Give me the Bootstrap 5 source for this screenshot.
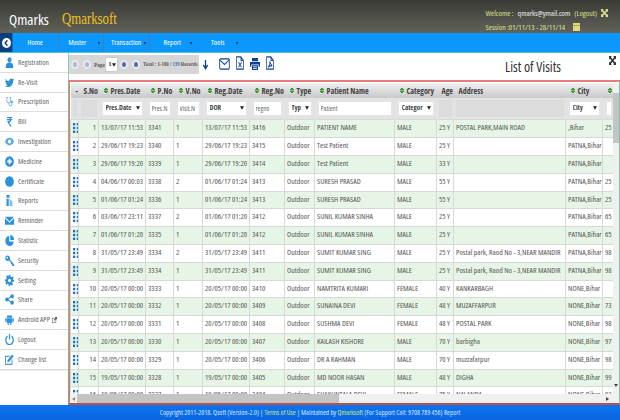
<!DOCTYPE html>
<html lang="en"><head><meta charset="utf-8"><title>Qmarks</title>
<link href="https://cdn.jsdelivr.net/npm/bootstrap@5.3.0/dist/css/bootstrap.min.css" rel="stylesheet">
<style>
html,body{overflow:hidden;width:620px;height:420px}
.page{width:620px;height:420px;font-family:"Open Sans","Liberation Sans",sans-serif;font-stretch:80%;font-size:8px;color:#555;overflow:hidden;background:#fff}
.minh0{min-height:0;min-width:0}
.sq{display:inline-block;transform:scaleX(.8);transform-origin:0 50%}
.top{height:33px;background:linear-gradient(#3a3a36,#62625b);padding:0 12px 0 9px;flex:none}
.brand1{font-size:15px;color:#fff;margin-top:9px;line-height:20px}
.brand2{font-family:"Liberation Serif",serif;font-size:16px;color:#eec21e;margin:9px 0 0 13px;line-height:20px}
.welcome{color:#dbe08c;font-size:7.8px;line-height:14px;margin-top:6px}
.welcome b{font-weight:400;color:#eee}
.bar{height:20px;background:#0b97fb;flex-wrap:nowrap;border-bottom:1px solid #55c0cc;flex:none}
.bar .back{width:13px;height:19px;background:#0a3f80;display:flex;align-items:center;justify-content:center;border-right:1px solid #07c}
.bar .nav-link{width:45.5px;height:19px;padding:0;color:#fff;font-size:7.5px;line-height:19px;text-align:center;border-right:1px solid #3a80c0;position:relative}
.bar .nav-link.plain{border-right:0}
.bar .nav-link.shift{padding-right:7px}
.caret{display:inline-block;border:1.6px solid transparent;border-top:3px solid #123;border-bottom:0;position:absolute;right:3px;top:9px}
.side{width:68px;background:#fff;flex:none}
.side .list-group-item{height:19.8px;padding:0 0 0 5px;border:0;border-bottom:1px solid #ddd;box-shadow:0 1px 1px #eee;border-radius:0;font-size:7.5px;color:#666;display:flex;align-items:center;gap:4px;background:#fff;white-space:nowrap}
.side svg{width:9px;height:11px;flex:none;fill:#2a92dc}
.side svg.ext{width:5px;height:6px;margin-left:-2px}
.tools{height:27px;padding:2px 4px 0 0;border-left:1px solid #7cc4b8;flex:none}
.pager{height:19px;width:130px;background:#d6d6d6;font-family:"Liberation Serif",serif;font-weight:700;font-size:6px;color:#555;padding-left:2px;white-space:nowrap;flex:none;overflow:hidden}
.dot{width:8px;height:9px;border-radius:50%;background:#a9b6cf;border:2px solid #e8e8f0;flex:none;margin-right:3.500px}
.dot.on{background:#5468a8}
.pager .pg{width:15px;margin-right:-3px;font-size:6.5px}
.pager .form-select{width:13px;height:15px;flex:none;min-height:0;border:1px solid #ccc;border-radius:0;background-color:#fff;font-family:"Liberation Serif",serif;font-size:7px;font-weight:700;color:#444;padding:0 0 0 2px;margin:0 2px 0 1px;background-size:4px 4px;background-position:right 1px center;background-image:url("data:image/svg+xml,%3Csvg xmlns='http://www.w3.org/2000/svg' viewBox='0 0 6 5'%3E%3Cpath d='M0 0h6L3 5z' fill='%23222'/%3E%3C/svg%3E")}
.pager em{font-style:normal;color:#3a6ab0}
.tico{fill:none;stroke:#0f3f96;stroke-width:1.2;flex:none}
.tools svg{flex:none}
.i-arrow{width:7px;height:11px;margin:4px 0 0 3px}
.i-mail{width:11px;height:12px;margin:3px 0 0 10px}
.i-doc{width:8px;height:14px;margin:1px 0 0 6px}
.i-print{width:10px;height:12px;margin:3px 0 0 6px}
.title{font-size:14px;color:#333;margin:2px 48px 0 auto;line-height:20px}
.fs{width:7px;height:9px;margin:1px 0 0 0}
.panel{height:325px;border-top:2px solid #e87c7c;border-bottom:2px solid #b8543c;border-right:1px solid #7cc4a8;border-left:2px solid #b09078;padding-top:1px;min-height:0}
.wrap{overflow:hidden;flex:1;min-width:0}
.grid{table-layout:fixed;width:543px;margin:0;border-collapse:collapse;font-size:7.8px;--bs-table-bg:transparent;color:#555}
.grid col:nth-child(1){width:8px}.grid col:nth-child(2){width:20px}.grid col:nth-child(3){width:47px}.grid col:nth-child(4){width:28px}.grid col:nth-child(5){width:29px}.grid col:nth-child(6){width:47px}.grid col:nth-child(7){width:35px}.grid col:nth-child(8){width:30px}.grid col:nth-child(9){width:80px}.grid col:nth-child(10){width:42px}.grid col:nth-child(11){width:17px}.grid col:nth-child(12){width:112px}.grid col:nth-child(13){width:37px}.grid col:nth-child(14){width:11px}
.grid th,.grid td{padding:0 2px;border:1px solid #d8d8d8;white-space:nowrap;overflow:hidden;vertical-align:middle}
.grid .h th{height:15px;padding:0 0 0 5px;background:linear-gradient(#efefef,#c9c9c9);font-weight:700;color:#444;border:0;font-size:8px}
.grid .f th{height:21px;background:#e3e3e3;border:0;padding:1px 2px}
.grid tbody tr{height:18px}
.grid tbody tr:nth-child(5n){height:17px}
.grid tbody tr:nth-child(odd){background:#e7f5e6}
.grid tbody tr:nth-child(even){background:#fff}
.grid .n{text-align:right}
.grid .form-control,.grid .form-select{font-family:"Open Sans",sans-serif;font-stretch:80%;height:17px;min-height:0;font-size:7px;padding:0 2px;border:2px solid #e4e4e4;border-radius:0;background-color:#fff;color:#777;box-shadow:none}
.grid .form-select{font-weight:700;color:#444;background-image:url("data:image/svg+xml,%3Csvg xmlns='http://www.w3.org/2000/svg' viewBox='0 0 6 5'%3E%3Cpath d='M0 0h6L3 5z' fill='%23222'/%3E%3C/svg%3E");background-size:4px 4px;background-position:right 2px center;padding-left:3px;padding-right:7px}
.grid .blank{display:block;height:17px;background:#dcdcdc}
.sort{display:inline-block;width:4px;height:8px;margin-right:3px;vertical-align:-1px;background:linear-gradient(135deg,transparent 50%,#3a9a3a 50%) 0 0/2px 3.5px no-repeat,linear-gradient(225deg,transparent 50%,#3a9a3a 50%) 2px 0/2px 3.5px no-repeat,linear-gradient(45deg,transparent 50%,#3a9a3a 50%) 0 4.5px/2px 3.5px no-repeat,linear-gradient(-45deg,transparent 50%,#3a9a3a 50%) 2px 4.5px/2px 3.5px no-repeat}
.grip{width:6px;height:10px;display:block;fill:#1c70c8}
.vbar{width:6px;background:#f0f0f0;flex:none;padding-top:10px;position:relative}
.vbar i{display:block;height:50px;background:#c4c4c4}
.vbar::after{content:"";position:absolute;left:1px;bottom:7px;border:2px solid transparent;border-top:3px solid #444;border-bottom:0}
.hbar{height:9px;background:#f0f0f0;flex:none;padding-left:7px;position:relative}
.hbar i{display:block;height:9px;width:262px;background:#c4c4c4}
.hbar::before{content:"";position:absolute;left:2px;top:3px;border:2px solid transparent;border-right:3px solid #888;border-left:0}
.hbar::after{content:"";position:absolute;right:10px;top:3px;border:2px solid transparent;border-left:3px solid #444;border-right:0}
.foot{height:15px;background:linear-gradient(#0d74f2,#0a66e0);color:#d7e6ff;font-size:7.05px;line-height:15px;text-align:center;white-space:nowrap;flex:none}
.foot a{color:#cfe86e;text-decoration:none}
</style></head>
<body>
<div class="page d-flex flex-column">
<svg width="0" height="0" class="position-absolute">
<symbol id="grip" viewBox="0 0 7 10" preserveAspectRatio="none"><rect width="2.6" height="2.4"/><rect x="4.4" width="2.6" height="2.4"/><rect y="3.8" width="2.6" height="2.4"/><rect x="4.4" y="3.8" width="2.6" height="2.4"/><rect y="7.6" width="2.6" height="2.4"/><rect x="4.4" y="7.6" width="2.6" height="2.4"/></symbol>
</svg>
<header class="top d-flex justify-content-between">
 <div class="d-flex"><div class="brand1">Qmarks</div><div class="brand2 sq">Qmarksoft</div></div>
 <div class="welcome">
  <div class="d-flex align-items-center gap-1">Welcome : <b>qmarks@ymail.com</b> (Logout) <svg width="7" height="8" viewBox="0 0 8 8" preserveAspectRatio="none" fill="#dbe08c"><path d="M0 0h3L2.200 1 4 2.800 5.800 1 5 0h3v3L7 2.200 5.200 4 7 5.800 8 5v3H5l.8-1L4 5.200 2.200 7 3 8H0V5l1 .8L2.800 4 1 2.200 0 3z"/></svg></div>
  <div class="d-flex align-items-center gap-1">Session :01/11/13 - 28/11/14 <svg class="ms-1" width="7" height="8" viewBox="0 0 8 8" preserveAspectRatio="none"><path fill="#dbdc78" d="M0 0h8v8H0z"/><path fill="#8a8a50" d="M0 2h8v.7H0z"/></svg></div>
 </div>
</header>
<nav class="bar nav d-flex">
 <a class="back" href="#"><svg width="9" height="10" viewBox="0 0 10 10" preserveAspectRatio="none"><circle cx="5" cy="5" r="5" fill="#fff"/><path d="M6 2.300 3.500 5 6 7.700" fill="none" stroke="#0a3f80" stroke-width="1.600"/></svg></a>
 <a class="nav-link" href="#">Home</a>
 <a class="nav-link shift" href="#">Master<span class="caret"></span></a>
 <a class="nav-link" href="#">Transaction<span class="caret"></span></a>
 <a class="nav-link plain" href="#">Report<span class="caret"></span></a>
 <a class="nav-link plain" href="#">Tools<span class="caret"></span></a>
</nav>
<div class="d-flex flex-grow-1 minh0">
 <aside class="side">
  <div class="list-group">
   <a class="list-group-item" href="#"><svg viewBox="0 0 12 12" preserveAspectRatio="none"><circle cx="6" cy="3" r="2.800"/><path d="M1 12c0-5 2-6 5-6s5 1 5 6z"/></svg>Registration</a>
   <a class="list-group-item" href="#"><svg viewBox="0 0 12 12" preserveAspectRatio="none"><path d="M0 2c2 2 3.500 2.500 5.500 2.700C5.500 2 8 .8 9.800 2.300L12 1.700l-1 1.700 1-.3-1.200 1.300C10.800 8 8 11 4.500 11 2.800 11 1.200 10.500 0 9.800c1.500.1 2.700-.2 3.800-1C2.500 8.700 1.600 8 1.200 6.800h1.100C1 6.300.3 5.300.3 4c.4.200.8.300 1.200.3C.2 3.400 0 3.400 0 2z"/></svg>Re-Visit</a>
   <a class="list-group-item" href="#"><svg viewBox="0 0 12 12" preserveAspectRatio="none"><path d="M2 1h2v1H3v3c0 1.200 1 2 2 2s2-.8 2-2V2H6V1h2v4c0 1.500-1 2.700-2.300 3v.5C5.700 10 7 10.600 8 10c.7-.4.800-1 .8-2a1.500 1.500 0 1 1 1 0c0 1.500-.3 2.300-1.300 2.900-1.600.8-3.800-.2-3.800-2.400V8C3 7.700 2 6.500 2 5z" opacity=".75"/></svg>Prescription</a>
   <a class="list-group-item" href="#"><svg viewBox="0 0 12 12" preserveAspectRatio="none"><path d="M2.500 1h7v1.300H7.600c.3.300.5.700.6 1.100h1.300v1.300H8.200C8 6.200 6.800 7 5.500 7.100L9 11.500H7L3 6.400V5.500h1.800c.9 0 1.500-.3 1.700-.8h-4V3.400h4C6.300 2.900 5.700 2.300 4.800 2.300H2.500z"/></svg>Bill</a>
   <a class="list-group-item" href="#"><svg viewBox="0 0 12 12" preserveAspectRatio="none"><path d="M0 6c1.500-3 3.500-4 6-4s4.500 1 6 4c-1.500 3-3.500 4-6 4S1.500 9 0 6z" opacity=".8"/><circle cx="6" cy="6" r="2.200" fill="#fff"/></svg>Investigation</a>
   <a class="list-group-item" href="#"><svg viewBox="0 0 12 12" preserveAspectRatio="none"><circle cx="6" cy="6" r="5.800"/><path fill="#fff" d="M5 3h2v2h2v2H7v2H5V7H3V5h2z"/></svg>Medicine</a>
   <a class="list-group-item" href="#"><svg viewBox="0 0 12 12" preserveAspectRatio="none"><circle cx="6" cy="6" r="5.800"/></svg>Certificate</a>
   <a class="list-group-item" href="#"><svg viewBox="0 0 12 12" preserveAspectRatio="none"><path d="M2 0h4v3H2zM2 4h3v8H2z"/><path d="M6 4l4 3v5H6z" fill="#7cc0ee"/></svg>Reports</a>
   <a class="list-group-item" href="#"><svg viewBox="0 0 12 12" preserveAspectRatio="none"><path d="M0 2h12L6 7zM0 3.500 6 8.500l6-5V10.500H0z"/></svg>Reminder</a>
   <a class="list-group-item" href="#"><svg viewBox="0 0 12 12" preserveAspectRatio="none"><path d="M5.500 1v6h6A5.500 5.500 0 1 1 5.500 1z"/><path d="M7 0a5 5 0 0 1 5 5.500H7z"/></svg>Statistic</a>
   <a class="list-group-item" href="#"><svg viewBox="0 0 12 12" preserveAspectRatio="none"><circle cx="3.500" cy="3.500" r="3"/><circle cx="3" cy="3" r="1" fill="#fff"/><path d="M5 5.500 6 4.500l6 5.500v2H9.500V10H8V8.800z"/></svg>Security</a>
   <a class="list-group-item" href="#"><svg viewBox="0 0 12 12" preserveAspectRatio="none"><path d="M5 0h2l.3 1.700 1.500.7 1.500-1 1.300 1.300-1 1.500.7 1.500L12 5v2l-1.700.3-.7 1.500 1 1.500-1.300 1.300-1.500-1-1.500.7L7 12H5l-.3-1.700-1.500-.7-1.500 1L.4 9.300l1-1.500-.7-1.500L0 7V5l1.700-.3.7-1.500-1-1.500L2.700.4l1.500 1 .5-.3z"/><circle cx="6" cy="6" r="2" fill="#fff"/></svg>Setting</a>
   <a class="list-group-item" href="#"><svg viewBox="0 0 12 12" preserveAspectRatio="none"><circle cx="2.500" cy="6" r="2.300"/><circle cx="9.500" cy="2.500" r="2.300"/><circle cx="9.500" cy="9.500" r="2.300"/><path d="M2.500 6l7-3.500M2.500 6l7 3.500" stroke="#2a92dc" stroke-width="1.200"/></svg>Share</a>
   <a class="list-group-item" href="#"><svg viewBox="0 0 12 12" preserveAspectRatio="none"><path d="M3 1.500h6l1 2.500H2zM2 4.500h8V9.500H8.500V12h-1.500V9.500H5V12H3.500V9.500H2zM.3 4.500h1.200v4H.3zM10.500 4.500h1.200v4h-1.200z"/></svg>Android APP<svg class="ext" viewBox="0 0 6 6" preserveAspectRatio="none"><path d="M0 1h3v.6H.6v3.800h3.800V3H5v3H0zM3 0h3v3L5 2 3 3.800 2.200 3 4 1z" fill="#555"/></svg></a>
   <a class="list-group-item" href="#"><svg viewBox="0 0 12 12" preserveAspectRatio="none"><path d="M3.300 2.400a5 5 0 1 0 5.400 0" fill="none" stroke="#2a92dc" stroke-width="1.600"/><path d="M5.200 0h1.600v6H5.200z"/></svg>Logout</a>
   <a class="list-group-item" href="#"><svg viewBox="0 0 12 12" preserveAspectRatio="none"><path d="M0 2h7L5.500 3.300H1.300v7.400h7.400V6.500L10 5v7H0z" opacity=".85"/><path d="M3.500 6.500 9.500.5l2 2-6 6-2.500.5z"/></svg>Change list</a>
  </div>
 </aside>
 <main class="flex-grow-1 d-flex flex-column minh0">
  <div class="tools d-flex align-items-start">
   <div class="pager d-flex align-items-center">
    <span class="dot"></span><span class="dot"></span>
    <span class="sq pg">Page</span><select class="form-select" aria-label="Page"><option>1</option></select>
    <span class="dot on"></span><span class="dot on"></span>
    <span class="sq">Total : 1-100 / <em>139</em> Records</span>
   </div>
   <svg class="i-arrow" viewBox="0 0 10 11" preserveAspectRatio="none"><path d="M5 1v8M2 6l3 3.500L8 6" fill="none" stroke="#0f3f96" stroke-width="1.800"/></svg>
   <svg class="tico i-mail" viewBox="0 0 15 13" preserveAspectRatio="none"><rect x="1" y="1" width="13" height="11" rx="1"/><path d="M1 2l6.500 5L14 2"/></svg>
   <svg class="tico i-doc" viewBox="0 0 13 16" preserveAspectRatio="none"><path d="M1 1h7l4 4v10H1zM8 1v4h4"/><path d="M4 7l5 6M9 7l-5 6"/></svg>
   <svg class="i-print" viewBox="0 0 15 15" preserveAspectRatio="none" fill="#0f3f96"><path d="M3 0h9v4H3zM0 5h15v6h-2V8H2v3H0zM3 9h9v6H3z"/><path fill="#fff" d="M4.500 10.500h6v1h-6zM4.500 12.500h6v1h-6z"/></svg>
   <svg class="tico i-doc" viewBox="0 0 13 16" preserveAspectRatio="none"><path d="M1 1h7l4 4v10H1zM8 1v4h4"/><path d="M3 13c2-1 4-4 3-7 1 3 2 4 4 5-2 0-5 0-7 2z"/></svg>
   <div class="title">List of Visits</div>
   <svg class="fs" viewBox="0 0 8 8" preserveAspectRatio="none" fill="#333"><path d="M0 0h3L2.200 1 4 2.800 5.800 1 5 0h3v3L7 2.200 5.200 4 7 5.800 8 5v3H5l.8-1L4 5.200 2.200 7 3 8H0V5l1 .8L2.800 4 1 2.200 0 3z"/></svg>
  </div>
  <section class="panel d-flex flex-column">
   <div class="d-flex flex-grow-1 minh0">
    <div class="wrap">
     <table class="table grid">
      <colgroup><col><col><col><col><col><col><col><col><col><col><col><col><col><col></colgroup>
      <thead>
       <tr class="h"><th>-</th><th>S.No</th><th><span class="sort"></span>Pres.Date</th><th><span class="sort"></span>P.No</th><th><span class="sort"></span>V.No</th><th><span class="sort"></span>Reg.Date</th><th><span class="sort"></span>Reg.No</th><th><span class="sort"></span>Type</th><th><span class="sort"></span>Patient Name</th><th><span class="sort"></span>Category</th><th>Age</th><th>Address</th><th><span class="sort"></span>City</th><th><span class="sort"></span></th></tr>
       <tr class="f"><th><span class="blank"></span></th><th><span class="blank"></span></th><th><select class="form-select" aria-label="Pres.Date"><option>Pres.Date</option></select></th><th><input class="form-control" placeholder="Pres.N"></th><th><input class="form-control" placeholder="Visit.N"></th><th><select class="form-select" aria-label="DOR"><option>DOR</option></select></th><th><input class="form-control" placeholder="regno"></th><th><select class="form-select" aria-label="Typ"><option>Typ</option></select></th><th><input class="form-control" placeholder="Patient"></th><th><select class="form-select" aria-label="Category"><option>Categor</option></select></th><th><span class="blank"></span></th><th><span class="blank"></span></th><th><select class="form-select" aria-label="City"><option>City</option></select></th><th><input class="form-control" placeholder="M"></th></tr>
      </thead>
      <tbody>
       <tr><td><svg class="grip"><use href="#grip"/></svg></td><td class="n">1</td><td>13/07/17 11:53</td><td>3341</td><td>1</td><td>13/07/17 11:53</td><td>3416</td><td>Outdoor</td><td>PATIENT NAME</td><td>MALE</td><td>25 Y</td><td>POSTAL PARK,MAIN ROAD</td><td>,Bihar</td><td>25</td></tr>
       <tr><td><svg class="grip"><use href="#grip"/></svg></td><td class="n">2</td><td>29/06/17 19:23</td><td>3340</td><td>1</td><td>29/06/17 19:23</td><td>3415</td><td>Outdoor</td><td>Test Patient</td><td>MALE</td><td>25 Y</td><td></td><td>PATNA,Bihar</td><td></td></tr>
       <tr><td><svg class="grip"><use href="#grip"/></svg></td><td class="n">3</td><td>29/06/17 19:20</td><td>3339</td><td>1</td><td>29/06/17 19:20</td><td>3414</td><td>Outdoor</td><td>Test Patient</td><td>MALE</td><td>33 Y</td><td></td><td>PATNA,Bihar</td><td></td></tr>
       <tr><td><svg class="grip"><use href="#grip"/></svg></td><td class="n">4</td><td>04/06/17 00:03</td><td>3338</td><td>2</td><td>01/06/17 01:24</td><td>3413</td><td>Outdoor</td><td>SURESH PRASAD</td><td>MALE</td><td>55 Y</td><td></td><td>PATNA,Bihar</td><td>25</td></tr>
       <tr><td><svg class="grip"><use href="#grip"/></svg></td><td class="n">5</td><td>01/06/17 01:24</td><td>3336</td><td>1</td><td>01/06/17 01:24</td><td>3413</td><td>Outdoor</td><td>SURESH PRASAD</td><td>MALE</td><td>55 Y</td><td></td><td>PATNA,Bihar</td><td>25</td></tr>
       <tr><td><svg class="grip"><use href="#grip"/></svg></td><td class="n">6</td><td>03/06/17 23:11</td><td>3337</td><td>2</td><td>01/06/17 01:20</td><td>3412</td><td>Outdoor</td><td>SUNIL KUMAR SINHA</td><td>MALE</td><td>25 Y</td><td></td><td>PATNA,Bihar</td><td>65</td></tr>
       <tr><td><svg class="grip"><use href="#grip"/></svg></td><td class="n">7</td><td>01/06/17 01:20</td><td>3335</td><td>1</td><td>01/06/17 01:20</td><td>3412</td><td>Outdoor</td><td>SUNIL KUMAR SINHA</td><td>MALE</td><td>25 Y</td><td></td><td>PATNA,Bihar</td><td>65</td></tr>
       <tr><td><svg class="grip"><use href="#grip"/></svg></td><td class="n">8</td><td>31/05/17 23:49</td><td>3334</td><td>2</td><td>31/05/17 23:49</td><td>3411</td><td>Outdoor</td><td>SUMIT KUMAR SING</td><td>MALE</td><td>25 Y</td><td>Postal park, Raod No - 3,NEAR MANDIR</td><td>PATNA,Bihar</td><td>98</td></tr>
       <tr><td><svg class="grip"><use href="#grip"/></svg></td><td class="n">9</td><td>31/05/17 23:49</td><td>3334</td><td>1</td><td>31/05/17 23:49</td><td>3411</td><td>Outdoor</td><td>SUMIT KUMAR SING</td><td>MALE</td><td>25 Y</td><td>Postal park, Raod No - 3,NEAR MANDIR</td><td>PATNA,Bihar</td><td>98</td></tr>
       <tr><td><svg class="grip"><use href="#grip"/></svg></td><td class="n">10</td><td>20/05/17 00:00</td><td>3333</td><td>1</td><td>20/05/17 00:00</td><td>3410</td><td>Outdoor</td><td>NAMTRITA KUMARI</td><td>FEMALE</td><td>40 Y</td><td>KANKARBAGH</td><td>NONE,Bihar</td><td></td></tr>
       <tr><td><svg class="grip"><use href="#grip"/></svg></td><td class="n">11</td><td>20/05/17 00:00</td><td>3332</td><td>1</td><td>20/05/17 00:00</td><td>3409</td><td>Outdoor</td><td>SUNAINA DEVI</td><td>FEMALE</td><td>48 Y</td><td>MUZAFFARPUR</td><td>NONE,Bihar</td><td>73</td></tr>
       <tr><td><svg class="grip"><use href="#grip"/></svg></td><td class="n">12</td><td>20/05/17 00:00</td><td>3331</td><td>1</td><td>20/05/17 00:00</td><td>3408</td><td>Outdoor</td><td>SUSHMA DEVI</td><td>FEMALE</td><td>48 Y</td><td>POSTAL PARK</td><td>NONE,Bihar</td><td>98</td></tr>
       <tr><td><svg class="grip"><use href="#grip"/></svg></td><td class="n">13</td><td>20/05/17 00:00</td><td>3330</td><td>1</td><td>20/05/17 00:00</td><td>3407</td><td>Outdoor</td><td>KAILASH KISHORE</td><td>MALE</td><td>70 Y</td><td>barbigha</td><td>NONE,Bihar</td><td>97</td></tr>
       <tr><td><svg class="grip"><use href="#grip"/></svg></td><td class="n">14</td><td>20/05/17 00:00</td><td>3329</td><td>1</td><td>20/05/17 00:00</td><td>3406</td><td>Outdoor</td><td>DR A RAHMAN</td><td>MALE</td><td>70 Y</td><td>muzzafarpur</td><td>NONE,Bihar</td><td>98</td></tr>
       <tr><td><svg class="grip"><use href="#grip"/></svg></td><td class="n">15</td><td>19/05/17 00:00</td><td>3328</td><td>1</td><td>19/05/17 00:00</td><td>3405</td><td>Outdoor</td><td>MD NOOR HASAN</td><td>MALE</td><td>48 Y</td><td>DIGHA</td><td>NONE,Bihar</td><td>99</td></tr>
       <tr><td><svg class="grip"><use href="#grip"/></svg></td><td class="n">16</td><td>19/05/17 00:00</td><td>3327</td><td>1</td><td>19/05/17 00:00</td><td>3404</td><td>Outdoor</td><td>SHAKUNTALA DEVI</td><td>FEMALE</td><td>75 Y</td><td>NALANDA</td><td>NONE,Bihar</td><td>92</td></tr>
      </tbody>
     </table>
    </div>
    <div class="vbar"><i></i></div>
   </div>
   <div class="hbar"><i></i></div>
  </section>
 </main>
</div>
<footer class="foot">Copyright 2011-2018. Qsoft (Version-2.0) | <a href="#">Terms of Use</a> | Maintained by <a href="#">Qmarksoft</a> (For Support Call: 9708 789 456) Report</footer>
</div>
<script src="https://cdn.jsdelivr.net/npm/bootstrap@5.3.0/dist/js/bootstrap.bundle.min.js"></script>
</body></html>
